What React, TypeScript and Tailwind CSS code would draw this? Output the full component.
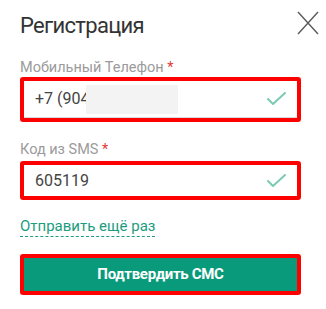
function Check() {
  return (
    <svg width="20" height="14" viewBox="0 0 20 14" fill="none" className="shrink-0">
      <polyline points="1,7 6,12 18,1" stroke="#79cbb3" strokeWidth="2" strokeLinecap="round" strokeLinejoin="round" />
    </svg>
  );
}

function Label({ text, className }: { text: string; className?: string }) {
  return (
    <div className={`text-[14.5px] leading-[19px] text-[#9b9b9b] ${className ?? ''}`}>
      {text} <span className="text-[#e53935]">*</span>
    </div>
  );
}

export default function App() {
  return (
    <div className="w-[326px] h-[309px] bg-white pt-3 pl-5 pr-[25px] font-['Roboto',sans-serif] overflow-hidden">
      {/* Header */}
      <div className="flex items-start justify-between">
        <h1 className="text-[22px] leading-7 tracking-[-0.7px] text-[#333]">Регистрация</h1>
        <button className="-mr-[18px] -mt-px">
          <svg width="22" height="24" viewBox="0 0 22 24" fill="none">
            <path d="M1 1L21 23M21 1L1 23" stroke="#5a5a5a" strokeWidth="1.4" />
          </svg>
        </button>
      </div>

      {/* Phone */}
      <Label text="Мобильный Телефон" className="mt-[18px]" />
      <div className="border-4 border-[#ff0000] rounded-[3px]">
        <div className="h-[37px] border-b border-[#d9d9d9] flex items-center pl-[11px] pr-[10px]">
          <span className="text-[16px] text-[#444] whitespace-nowrap">+7 (904</span>
          <span className="inline-block -ml-[4px] w-[92px] h-[29px] bg-[#f3f3f3]" />
          <div className="flex-1" />
          <Check />
        </div>
      </div>

      {/* SMS code */}
      <Label text="Код из SMS" className="mt-[18px] mb-[2px]" />
      <div className="border-4 border-[#ff0000] rounded-[3px]">
        <div className="h-[31px] flex items-center pl-[11px] pr-[10px]">
          <span className="text-[16px] text-[#444]">605119</span>
          <div className="flex-1" />
          <Check />
        </div>
      </div>

      {/* Resend */}
      <a className="inline-block mt-[16px] text-[15px] leading-5 text-[#1b9c7e] border-b border-dashed border-[#1b9c7e] cursor-pointer">
        Отправить ещё раз
      </a>

      {/* Confirm */}
      <button className="mt-[16px] w-full h-[41px] border-4 border-[#ff0000] rounded-[3px] bg-[#089a7a] text-white font-bold text-[15px] tracking-[-0.3px] flex items-center justify-center">
        Подтвердить СМС
      </button>
    </div>
  );
}
